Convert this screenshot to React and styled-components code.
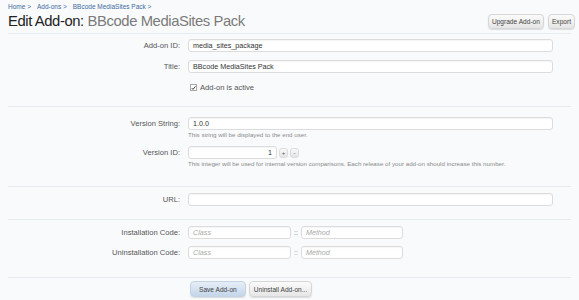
import { createGlobalStyle } from 'styled-components'
import styled from 'styled-components'

const Global = createGlobalStyle`
  html, body {
    margin: 0;
    padding: 0;
    background: #f9fafc;
  }
  body {
    font-family: "Liberation Sans", Arial, sans-serif;
    color: #333;
  }
  * { box-sizing: border-box; }
`

const Page = styled.div`
  width: 579px;
  height: 300px;
  padding: 0 8px;
  overflow: hidden;
`

const Crumbs = styled.div`
  display: flex;
  gap: 6px;
  height: 12px;
  padding-top: 2px;
  font-size: 6.5px;
  line-height: 9px;
  color: #3d6aa0;
`

const Header = styled.div`
  display: flex;
  align-items: flex-end;
  justify-content: space-between;
  height: 22px;
  padding-bottom: 3px;
  border-bottom: 1px solid #e6ebf1;
`

const Title = styled.h1`
  margin: 0;
  font-weight: normal;
  font-size: 14.8px;
  line-height: 18px;
  letter-spacing: -0.4px;
  color: #222;
  white-space: nowrap;

  span {
    color: #7a7a7a;
  }
`

const Actions = styled.div`
  display: flex;
  gap: 4px;
  margin-right: -4px;
  margin-bottom: 1px;
`

const Button = styled.button`
  height: ${p => p.h || 15}px;
  padding: 0 ${p => p.pad || 3}px;
  border: 1px solid ${p => (p.primary ? '#c3d3e4' : '#d6d6d6')};
  border-radius: 4px;
  background: ${p =>
    p.primary
      ? 'linear-gradient(#e6eef7, #c4d6ea)'
      : 'linear-gradient(#fbfbfb, #e6e6e6)'};
  box-shadow: 0 1px 1px rgba(0, 0, 0, 0.12);
  font-family: inherit;
  font-size: 6.6px;
  color: #444;
  white-space: nowrap;
`

const Section = styled.div`
  display: flex;
  flex-direction: column;
  gap: ${p => p.gap || 0}px;
  padding: ${p => p.top}px 0 ${p => p.bottom}px;
  border-bottom: 1px solid #e6ebf1;
`

const Row = styled.div`
  display: grid;
  grid-template-columns: 172px 1fr;
  column-gap: 8px;
  align-items: start;
`

const Label = styled.div`
  text-align: right;
  font-size: 7.6px;
  line-height: 13px;
  color: #555;
  white-space: nowrap;
`

const Field = styled.div`
  display: flex;
  flex-direction: column;
  align-items: flex-start;
`

const Line = styled.div`
  display: flex;
  align-items: center;
  gap: ${p => p.gap || 2}px;
`

const Input = styled.div`
  width: ${p => p.w || 365}px;
  height: 13px;
  padding: 0 4px;
  background: #fff;
  border: 1px solid #dcdcdc;
  border-radius: 3px;
  box-shadow: inset 0 1px 1px rgba(0, 0, 0, 0.04);
  font-size: 7.2px;
  line-height: 11px;
  color: ${p => (p.placeholder ? '#aaa' : '#333')};
  font-style: ${p => (p.placeholder ? 'italic' : 'normal')};
  text-align: ${p => p.align || 'left'};
  white-space: nowrap;
`

const Spin = styled.div`
  width: 9px;
  height: 10px;
  border: 1px solid #dcdcdc;
  border-radius: 3px;
  background: linear-gradient(#fafafa, #e4e4e4);
  font-size: 6px;
  line-height: 8px;
  text-align: center;
  color: #555;
`

const Hint = styled.div`
  font-size: 6.2px;
  line-height: 10px;
  color: #8a8a8a;
  white-space: nowrap;
`

const Check = styled.label`
  display: flex;
  align-items: center;
  gap: 3px;
  height: 13px;
  padding-left: 2px;
  font-size: 7.6px;
  color: #555;
`

const Box = styled.span`
  display: inline-flex;
  align-items: center;
  justify-content: center;
  width: 7px;
  height: 7px;
  border: 1px solid #aaa;
  background: #fff;
`

const Colon = styled.span`
  font-size: 7px;
  color: #888;
`

const Submit = styled.div`
  display: flex;
  gap: 3px;
  padding: 3px 0 0 182px;
`

export default function App() {
  return (
    <Page>
      <Global />
      <Crumbs>
        <span>Home &gt;</span>
        <span>Add-ons &gt;</span>
        <span>BBcode MediaSites Pack &gt;</span>
      </Crumbs>
      <Header>
        <Title>
          Edit Add-on: <span>BBcode MediaSites Pack</span>
        </Title>
        <Actions>
          <Button>Upgrade Add-on</Button>
          <Button>Export</Button>
        </Actions>
      </Header>

      <Section top={5} bottom={12} gap={8}>
        <Row>
          <Label>Add-on ID:</Label>
          <Input>media_sites_package</Input>
        </Row>
        <Row>
          <Label>Title:</Label>
          <Input>BBcode MediaSites Pack</Input>
        </Row>
        <Row>
          <span />
          <Check>
            <Box>
              <svg width="6" height="6" viewBox="0 0 10 10">
                <path d="M1.5 5.2 L4 7.8 L8.8 1.8" fill="none" stroke="#444" strokeWidth="2" />
              </svg>
            </Box>
            Add-on is active
          </Check>
        </Row>
      </Section>

      <Section top={10} bottom={17} gap={6}>
        <Row>
          <Label>Version String:</Label>
          <Field>
            <Input>1.0.0</Input>
            <Hint>This string will be displayed to the end user.</Hint>
          </Field>
        </Row>
        <Row>
          <Label>Version ID:</Label>
          <Field>
            <Line>
              <Input w={89} align="right">1</Input>
              <Spin>+</Spin>
              <Spin>-</Spin>
            </Line>
            <Hint>
              This integer will be used for internal version comparisons. Each release of your add-on should increase this number.
            </Hint>
          </Field>
        </Row>
      </Section>

      <Section top={6} bottom={13}>
        <Row>
          <Label>URL:</Label>
          <Input />
        </Row>
      </Section>

      <Section top={6} bottom={18} gap={7}>
        <Row>
          <Label>Installation Code:</Label>
          <Line gap={3}>
            <Input w={103} placeholder>Class</Input>
            <Colon>::</Colon>
            <Input w={102} placeholder>Method</Input>
          </Line>
        </Row>
        <Row>
          <Label>Uninstallation Code:</Label>
          <Line gap={3}>
            <Input w={103} placeholder>Class</Input>
            <Colon>::</Colon>
            <Input w={102} placeholder>Method</Input>
          </Line>
        </Row>
      </Section>

      <Submit>
        <Button primary h={16} pad={8}>Save Add-on</Button>
        <Button h={16} pad={4}>Uninstall Add-on...</Button>
      </Submit>
    </Page>
  )
}
